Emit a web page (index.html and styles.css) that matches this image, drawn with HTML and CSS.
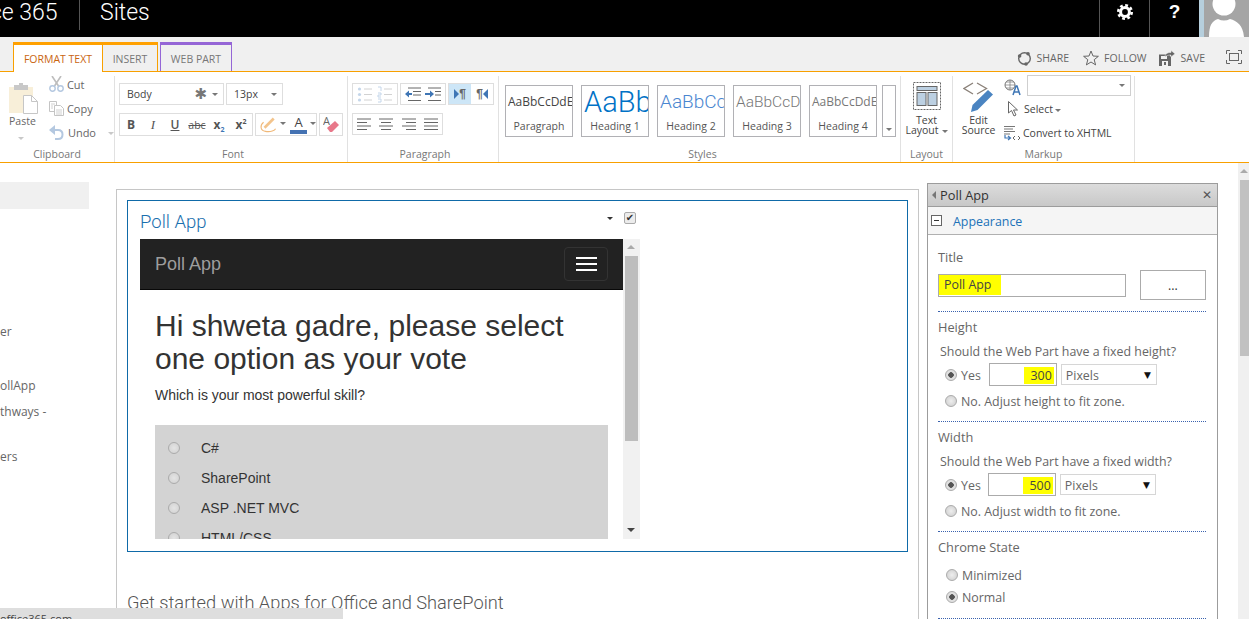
FILE: index.html
```html
<!DOCTYPE html>
<html lang="en">
<head>
<meta charset="utf-8">
<title>Poll App - Sites</title>
<link rel="stylesheet" href="styles.css">
</head>
<body>
<div class="page">
  <header class="topbar">
    <div class="brand">ce 365</div>
    <div class="site">Sites</div>
    <div class="top-space"></div>
    <div class="tool">
      <svg width="18" height="18" viewBox="0 0 18 18"><circle cx="9" cy="9" r="4.4" fill="none" stroke="#fff" stroke-width="3"/><circle cx="9" cy="9" r="6.7" fill="none" stroke="#fff" stroke-width="2.6" stroke-dasharray="2.8 2.46"/></svg>
    </div>
    <div class="tool tool-q">?</div>
    <div class="avatar">
      <svg width="45" height="37" viewBox="0 0 45 37"><circle cx="20" cy="4" r="11.5" fill="#fff"/><path d="M5 37c0-12 3-16 9-18 4 2 8 2 12 0 7 2 13 6 14 18z" fill="#fff"/></svg>
    </div>
  </header>

  <nav class="tabbar">
    <div class="tab tab-active">FORMAT TEXT</div>
    <div class="tab tab-insert">INSERT</div>
    <div class="tab tab-webpart">WEB PART</div>
    <div class="top-space"></div>
    <div class="action">
      <svg width="15" height="15" viewBox="0 0 15 15"><circle cx="7.5" cy="7.5" r="5.8" fill="none" stroke="#666" stroke-width="1.4"/><circle cx="2.6" cy="5" r="1.8" fill="#666"/><circle cx="11" cy="2.8" r="1.8" fill="#666"/><circle cx="9" cy="13" r="1.8" fill="#666"/></svg>
      <span>SHARE</span>
    </div>
    <div class="action action-follow">
      <svg width="16" height="16" viewBox="0 0 16 16"><path d="M8 1l2 5 5.4.3-4.2 3.4 1.4 5.2L8 12l-4.600 2.900 1.400-5.200L.6 6.300 6 6z" fill="none" stroke="#666" stroke-width="1"/></svg>
      <span>FOLLOW</span>
    </div>
    <div class="action action-save">
      <svg width="16" height="16" viewBox="0 0 16 16"><path d="M0 4.500h10l2 2V16H0z" fill="#666"/><rect x="2" y="6" width="6" height="3" fill="#f0f0f0"/><rect x="3" y="11" width="6" height="5" fill="#f0f0f0"/><rect x="5" y="12" width="2" height="3" fill="#666"/><path d="M6 7c0-3 2-4.500 6-4.500V.5l4 3.300-4 3.200V5C9.500 5 7.500 5.500 6 7z" fill="#666" stroke="#f0f0f0" stroke-width=".5"/></svg>
      <span>SAVE</span>
    </div>
    <div class="focus">
      <svg width="16" height="14" viewBox="0 0 16 14"><path d="M.5 4V.5H4M12 .5h3.500V4M15.500 10v3.500H12M4 13.500H.5V10" fill="none" stroke="#666"/><rect x="3.500" y="3.500" width="9" height="7" fill="none" stroke="#666"/></svg>
    </div>
  </nav>

  <section class="ribbon">
    <div class="group g-clip">
      <div class="group-body clip-body">
        <div class="paste">
          <svg width="29" height="31" viewBox="0 0 29 31"><rect x="0" y="4" width="24" height="26" fill="#f8efd9"/><rect x="5" y="2" width="14" height="5" fill="#c8c8c8"/><rect x="10" y="0" width="4" height="4" fill="#c8c8c8"/><path d="M14.500 12.500h8l6 6v12h-14z" fill="#fff" stroke="#c6c6c6"/><path d="M22.500 12.500v6h6" fill="none" stroke="#c6c6c6"/></svg>
          <span class="paste-label">Paste</span>
          <i class="caret caret-pale"></i>
        </div>
        <div class="clip-list">
          <div class="clip-row">
            <svg width="15" height="16" viewBox="0 0 15 16"><path d="M3 0l6.500 10M12 0L5.500 10" stroke="#bdbdbd" stroke-width="1.600" fill="none"/><circle cx="3.500" cy="12.500" r="2.700" fill="none" stroke="#b4c8e0" stroke-width="1.400"/><circle cx="11.500" cy="12.500" r="2.700" fill="none" stroke="#b4c8e0" stroke-width="1.400"/></svg>
            <span>Cut</span>
          </div>
          <div class="clip-row">
            <svg width="15" height="15" viewBox="0 0 15 15"><path d="M.5.500h7v10h-7z" fill="#fff" stroke="#c4c4c4"/><path d="M5.500 4.500h6l3 3v7h-9z" fill="#fff" stroke="#c4c4c4"/><path d="M7 9h6M7 11h6M7 13h6M2 3h4M2 5h2M2 7h2" stroke="#d0d0d0"/></svg>
            <span>Copy</span>
          </div>
          <div class="clip-row clip-undo">
            <svg width="15" height="15" viewBox="0 0 15 15"><path d="M1 5h8c3 0 4.500 2 4.500 4.500S12 14 9 14H6" fill="none" stroke="#b4c8e0" stroke-width="2"/><path d="M6 0v10L0 5z" fill="#b4c8e0"/></svg>
            <span>Undo</span>
            <i class="caret caret-pale"></i>
          </div>
        </div>
      </div>
      <div class="group-label">Clipboard</div>
    </div>

    <div class="group g-font">
      <div class="group-body stack">
        <div class="tool-row">
          <div class="field f-body"><span>Body</span><b class="star">✱</b><i class="caret"></i></div>
          <div class="field f-size"><span>13px</span><i class="caret"></i></div>
        </div>
        <div class="tool-row row-two">
          <div class="box b-format">
            <span class="fmt fmt-b">B</span>
            <span class="fmt fmt-i">I</span>
            <span class="fmt fmt-u">U</span>
            <span class="fmt fmt-s">abc</span>
            <span class="fmt fmt-x">x<sub>2</sub></span>
            <span class="fmt fmt-x">x<sup>2</sup></span>
          </div>
          <div class="box b-color">
            <svg width="20" height="19" viewBox="0 0 20 19"><path d="M5 12L15 2l2 2L7 14z" fill="#f3c48c"/><path d="M5 7c-4 3-4 9 2 10s10-1 11-3" fill="none" stroke="#f0b878" stroke-width="1.200"/></svg>
            <i class="caret caret-tight"></i>
            <span class="font-a">A</span>
            <i class="caret caret-tight"></i>
          </div>
          <div class="box b-erase">
            <svg width="16" height="17" viewBox="0 0 16 17"><text x="0" y="9" class="erase-a">A</text><path d="M4 12l8-7 4 4-7 7H7z" fill="#e8788a"/></svg>
          </div>
        </div>
      </div>
      <div class="group-label">Font</div>
    </div>

    <div class="group g-para">
      <div class="group-body stack">
        <div class="tool-row para-row">
          <div class="box b-icons b-lists">
            <svg width="16" height="17" viewBox="0 0 16 17"><path d="M7 3h8M7 8.500h8M7 14h8" stroke="#d2d2d2"/><circle cx="2.500" cy="3" r="1.600" fill="#c4d6ea"/><circle cx="2.500" cy="8.500" r="1.600" fill="#c4d6ea"/><circle cx="2.500" cy="14" r="1.600" fill="#c4d6ea"/></svg>
            <svg width="16" height="17" viewBox="0 0 16 17"><path d="M7 3h8M7 8.500h8M7 14h8" stroke="#d2d2d2"/><path d="M1 1h3v4M1 7h3v2H1v2h3M1 13h3v3H1" stroke="#c4d6ea" fill="none"/></svg>
          </div>
          <div class="box b-icons">
            <svg width="16" height="15" viewBox="0 0 16 15"><path d="M3 1h13M8 4.500h8M8 8h8M3 13.500h13" stroke="#666"/><path d="M0 7l4-3.500V6h3v2H4v2.500z" fill="#3f76b5"/></svg>
            <svg width="16" height="15" viewBox="0 0 16 15"><path d="M3 1h13M10 4.500h6M10 8h6M3 13.500h13" stroke="#666"/><path d="M9 7L5 3.500V6H0v2h5v2.500z" fill="#3f76b5"/></svg>
          </div>
          <div class="box b-dir">
            <div class="dir dir-on"><svg width="5" height="10" viewBox="0 0 5 10"><path d="M0 0l5 5-5 5z" fill="#3f76b5"/></svg><span>¶</span></div>
            <div class="dir"><span>¶</span><svg width="5" height="10" viewBox="0 0 5 10"><path d="M5 0L0 5l5 5z" fill="#3f76b5"/></svg></div>
          </div>
        </div>
        <div class="tool-row row-two para-row">
          <div class="box b-align">
            <svg width="14" height="12" viewBox="0 0 14 12"><path d="M0 1h14M0 4.500h10M0 8h14M0 11.500h10" stroke="#666"/></svg>
            <svg width="14" height="12" viewBox="0 0 14 12"><path d="M0 1h14M2 4.500h10M0 8h14M2 11.500h10" stroke="#666"/></svg>
            <svg width="14" height="12" viewBox="0 0 14 12"><path d="M0 1h14M4 4.500h10M0 8h14M4 11.500h10" stroke="#666"/></svg>
            <svg width="14" height="12" viewBox="0 0 14 12"><path d="M0 1h14M0 4.500h14M0 8h14M0 11.500h14" stroke="#666"/></svg>
          </div>
        </div>
      </div>
      <div class="group-label">Paragraph</div>
    </div>

    <div class="group g-styles">
      <div class="group-body style-list">
        <div class="style-box"><div class="preview p-para">AaBbCcDdE</div><div class="style-name">Paragraph</div></div>
        <div class="style-box"><div class="preview p-h1">AaBb</div><div class="style-name">Heading 1</div></div>
        <div class="style-box"><div class="preview p-h2">AaBbCc</div><div class="style-name">Heading 2</div></div>
        <div class="style-box"><div class="preview p-h3">AaBbCcDd</div><div class="style-name">Heading 3</div></div>
        <div class="style-box"><div class="preview p-h4">AaBbCcDdE</div><div class="style-name">Heading 4</div></div>
        <div class="style-more"><i class="caret"></i></div>
      </div>
      <div class="group-label">Styles</div>
    </div>

    <div class="group g-layout">
      <div class="group-body big-col">
        <svg width="28" height="28" viewBox="0 0 28 28"><rect x=".5" y=".5" width="27" height="27" fill="none" stroke="#666" stroke-dasharray="2 1"/><rect x="4" y="4.500" width="20" height="4" fill="#bcd0e2" stroke="#666"/><rect x="4" y="10.500" width="9" height="13" fill="#bcd0e2" stroke="#666"/><rect x="15" y="10.500" width="9" height="13" fill="#bcd0e2" stroke="#666"/></svg>
        <div class="big-label">Text<br>Layout<i class="caret caret-inline"></i></div>
      </div>
      <div class="group-label">Layout</div>
    </div>

    <div class="group g-markup">
      <div class="group-body markup-body">
        <div class="big-col edit-col">
          <svg width="31" height="30" viewBox="0 0 31 30"><path d="M10 1L1 6.500l9 5.500M14 1l9.500 5.500L14 12" fill="none" stroke="#8a8078" stroke-width="1.300"/><path d="M8 30l1.500-7L25 8l5 4.500L14.500 28z" fill="#4a84c1"/></svg>
          <div class="big-label">Edit<br>Source</div>
        </div>
        <div class="markup-list">
          <div class="markup-top">
            <svg width="17" height="17" viewBox="0 0 17 17"><circle cx="6" cy="6" r="5" fill="none" stroke="#777"/><path d="M1 6h10M6 1v10M2 3h8M2 9h8" stroke="#777" stroke-width=".7"/><path d="M9 16l3-9h1l3 9M10.500 13h4" fill="none" stroke="#3f76b5" stroke-width="1.500"/></svg>
            <div class="lang-select"><i class="caret"></i></div>
          </div>
          <div class="markup-row markup-select">
            <svg width="10" height="16" viewBox="0 0 10 16"><path d="M.5.500v11.500l3-2.500 2.500 5.500 2-1-2.500-5H9.500z" fill="#fff" stroke="#666"/></svg>
            <span>Select</span><i class="caret caret-inline"></i>
          </div>
          <div class="markup-row markup-convert">
            <svg width="17" height="15" viewBox="0 0 17 15"><path d="M0 .500h11M0 3h9M0 5.500h11M0 8h6" stroke="#777"/><path d="M1 9v3h5M4 10l2.500 2L4 14" fill="none" stroke="#3f76b5" stroke-width="1.200"/><path d="M11 10l-2 2 2 2M14 10l2 2-2 2" fill="none" stroke="#666"/></svg>
            <span>Convert to XHTML</span>
          </div>
        </div>
      </div>
      <div class="group-label">Markup</div>
    </div>
  </section>

  <div class="work">
    <aside class="sidenav">
      <div class="nav-current"></div>
      <div class="nav-item nav-a">er</div>
      <div class="nav-item nav-b">ollApp</div>
      <div class="nav-item nav-c">thways -</div>
      <div class="nav-item nav-d">ers</div>
    </aside>

    <main class="content">
      <div class="webpart">
        <div class="wp-head">
          <h2 class="wp-title">Poll App</h2>
          <i class="caret caret-dark"></i>
          <span class="wp-check">✔</span>
        </div>
        <div class="frame">
          <div class="frame-main">
            <div class="navbar">
              <span class="nav-brand">Poll App</span>
              <div class="burger"><i></i><i></i><i></i></div>
            </div>
            <div class="frame-body">
              <h1 class="poll-q">Hi shweta gadre, please select one option as your vote</h1>
              <p class="poll-sub">Which is your most powerful skill?</p>
              <div class="poll-options">
                <div class="poll-opt"><i class="radio"></i><span>C#</span></div>
                <div class="poll-opt"><i class="radio"></i><span>SharePoint</span></div>
                <div class="poll-opt"><i class="radio"></i><span>ASP .NET MVC</span></div>
                <div class="poll-opt"><i class="radio"></i><span>HTML/CSS</span></div>
              </div>
            </div>
          </div>
          <div class="frame-scroll">
            <i class="arrow-up"></i>
            <div class="frame-thumb"></div>
            <i class="arrow-down"></i>
          </div>
        </div>
      </div>
      <h3 class="started">Get started with Apps for Office and SharePoint</h3>
    </main>

    <aside class="panel">
      <div class="panel-head">
        <i class="back-arrow"></i>
        <span class="panel-title">Poll App</span>
        <span class="panel-close">✕</span>
      </div>
      <div class="panel-sec">
        <span class="minus"></span>
        <span class="panel-sec-name">Appearance</span>
      </div>
      <div class="panel-body">
        <div class="p-label">Title</div>
        <div class="title-row">
          <div class="title-input"><span class="hl hl-title">Poll App</span></div>
          <div class="more-btn">...</div>
        </div>
        <div class="dots"></div>
        <div class="p-label">Height</div>
        <div class="p-question">Should the Web Part have a fixed height?</div>
        <div class="size-row">
          <i class="radio radio-on"></i><span class="yes">Yes</span>
          <div class="size-input"><span class="hl hl-num">300</span></div>
          <div class="unit"><span>Pixels</span><b>▼</b></div>
        </div>
        <div class="no-row"><i class="radio"></i><span>No. Adjust height to fit zone.</span></div>
        <div class="dots"></div>
        <div class="p-label">Width</div>
        <div class="p-question">Should the Web Part have a fixed width?</div>
        <div class="size-row size-w">
          <i class="radio radio-on"></i><span class="yes">Yes</span>
          <div class="size-input"><span class="hl hl-num">500</span></div>
          <div class="unit"><span>Pixels</span><b>▼</b></div>
        </div>
        <div class="no-row"><i class="radio"></i><span>No. Adjust width to fit zone.</span></div>
        <div class="dots"></div>
        <div class="p-label">Chrome State</div>
        <div class="state-row state-first"><i class="radio"></i><span>Minimized</span></div>
        <div class="state-row"><i class="radio radio-on"></i><span>Normal</span></div>
        <div class="dots dots-last"></div>
      </div>
    </aside>

    <div class="page-scroll">
      <i class="arrow-up"></i>
      <div class="page-thumb"></div>
    </div>
  </div>

  <div class="status">office365.com</div>
</div>
</body>
</html>
```
FILE: styles.css
```css
* { box-sizing: border-box; }
html, body { margin: 0; padding: 0; }
body { font-family: "Open Sans", "Liberation Sans", sans-serif; color: #444; background: #fff; }
i { display: block; font-style: normal; }
.page { position: relative; width: 1249px; height: 619px; overflow: hidden; }

/* top bar */
.topbar { display: flex; height: 37px; background: #000; color: #fff; }
.brand { width: 80px; height: 30px; border-right: 1px solid #555; font-family: Roboto, sans-serif; font-size: 23px; font-weight: 300; line-height: 26px; text-indent: -10px; white-space: nowrap; }
.site { margin-left: 20px; font-family: Roboto, sans-serif; font-size: 23px; font-weight: 300; line-height: 26px; }
.top-space { flex: 1; }
.tool { width: 50px; display: flex; justify-content: center; padding-top: 3px; border-left: 1px solid #555; }
.tool-q { font: bold 19px/24px "Liberation Sans", sans-serif; padding-top: 0; }
.avatar { width: 50px; padding-left: 5px; background: linear-gradient(to right, #b6cfdd 5px, #a5a5a5 5px); }
.avatar svg { display: block; }

/* tab bar */
.tabbar { display: flex; height: 35px; padding: 5px 7px 0 13px; background: #f0f0f0; border-bottom: 1px solid #f8a000; }
.tab { height: 30px; margin-bottom: -1px; font-size: 10.500px; line-height: 28px; text-align: center; border-top: 3px solid #ffa000; color: #777; }
.tab-active { width: 90px; background: #fff; color: #c9650f; border-left: 1px solid #f8a000; border-right: 1px solid #f8a000; }
.tab-insert { width: 55px; border-right: 1px solid #f8a000; }
.tab-webpart { width: 72px; margin-left: 2px; height: 29px; border-top-color: #9566d6; border-left: 1px solid #9566d6; border-right: 1px solid #9566d6; }
.action { display: flex; align-items: center; gap: 5px; height: 32px; font-size: 10.500px; color: #666; }
.action-follow { margin-left: 14px; }
.action-save { margin-left: 12px; gap: 6px; }
.focus { margin-left: 21px; height: 32px; padding-top: 8px; }
.focus svg { display: block; }

/* ribbon */
.ribbon { display: flex; height: 91px; padding-top: 4px; border-bottom: 1px solid #f8a000; }
.group { display: flex; flex-direction: column; height: 86px; border-right: 1px solid #e1e1e1; }
.group-body { flex: 1; min-height: 0; }
.group-label { height: 15px; font-size: 10.500px; line-height: 14px; text-align: center; color: #777; }
.g-clip { width: 115px; }
.g-font { width: 233px; padding-left: 4px; }
.g-para { width: 151px; padding-left: 4px; }
.g-styles { width: 402px; padding-left: 6px; }
.g-layout { width: 52px; }
.g-markup { width: 182px; }
.stack { padding-top: 7px; }
.tool-row { display: flex; gap: 2px; }
.row-two { margin-top: 8px; }
.caret { width: 0; height: 0; border-left: 3.500px solid transparent; border-right: 3.500px solid transparent; border-top: 3.500px solid #777; }
.caret-pale { border-top-color: #c8c8c8; }
.caret-tight { margin: 8px 0 0 3px; align-self: flex-start; }
.caret-inline { display: inline-block; margin-left: 3px; vertical-align: middle; }
.caret-dark { border-top-color: #333; border-left-width: 3px; border-right-width: 3px; margin: 16px 0 0 auto; }

.clip-body { display: flex; }
.paste { width: 49px; padding: 7px 0 0 9px; }
.paste svg { display: block; }
.paste-label { display: block; width: 24px; margin-top: -1px; font-size: 10.500px; line-height: 16px; text-align: center; color: #666; }
.paste .caret { margin: 8px 0 0 9px; }
.clip-list { font-size: 11px; color: #666; }
.clip-row { display: flex; align-items: center; gap: 3px; height: 16px; margin-bottom: 8px; }
.clip-undo { gap: 4px; }
.clip-undo .caret { margin: 3px 0 0 8px; }

.field, .box { height: 22px; border: 1px solid #dedede; display: flex; align-items: center; background: #fff; }
.field { font-size: 10.500px; color: #444; padding-left: 7px; }
.f-body { width: 105px; }
.f-size { width: 57px; }
.field span { flex: 1; }
.field .caret { margin-right: 5px; }
.star { font: 15px/1 "DejaVu Sans", sans-serif; color: #777; margin-right: 5px; }
.b-format { width: 134px; height: 23px; }
.fmt { flex: none; width: 22px; text-align: center; color: #555; font-size: 12px; line-height: 20px; white-space: nowrap; }
.fmt-b { font-weight: 700; }
.fmt-i { font-style: italic; font-family: "Liberation Serif", serif; font-size: 13px; }
.fmt-u { text-decoration: underline; font-weight: 600; }
.fmt-s { font-size: 10.500px; text-decoration: line-through; }
.fmt-x { font-weight: 700; }
.fmt sub, .fmt sup { font-size: 7px; color: #3f76b5; line-height: 0; }
.fmt sup { color: #555; }
.b-color { width: 62px; height: 23px; padding-left: 3px; }
.font-a { width: 18px; margin-left: 4px; text-align: center; font-size: 13px; line-height: 14px; color: #444; border-bottom: 4px solid #4472b2; height: 19px; }
.b-erase { width: 24px; height: 23px; justify-content: center; }
.erase-a { font-size: 11px; fill: #666; }
.para-row .box { height: 22px; }
.b-icons { width: 46px; justify-content: space-between; padding: 0 4px; }
.b-dir { width: 46px; padding: 0; }
.dir { width: 22px; height: 20px; display: flex; align-items: center; justify-content: center; font: bold 12px/20px "Liberation Sans", sans-serif; color: #666; }
.dir-on { background: #cde6f7; }
.b-align { width: 91px; justify-content: space-between; padding: 0 4px; height: 22px; }

.style-list { display: flex; gap: 8px; padding-top: 9px; }
.style-box { width: 68px; height: 52px; border: 1px solid #b1b1b5; overflow: hidden; }
.preview { height: 32px; padding-left: 2px; white-space: nowrap; overflow: hidden; line-height: 32px; font-family: Roboto, sans-serif; font-weight: 300; }
.p-para { font-family: "Open Sans", sans-serif; font-size: 12px; color: #444; font-weight: 400; }
.p-h1 { font-size: 29px; color: #0072c6; }
.p-h2 { font-size: 19px; color: #4a86d0; }
.p-h3 { font-size: 15.500px; color: #777; }
.p-h4 { font-family: "Open Sans", sans-serif; font-size: 12px; color: #777; font-weight: 400; }
.style-name { font-size: 10.500px; line-height: 16px; text-align: center; color: #555; }
.style-more { width: 14px; height: 52px; margin-left: -3px; border: 1px solid #b1b1b5; display: flex; align-items: flex-end; justify-content: center; padding-bottom: 5px; }

.big-col { display: flex; flex-direction: column; align-items: center; padding-top: 6px; }
.big-col svg { display: block; }
.big-label { margin-top: 5px; font-size: 10.500px; line-height: 10px; text-align: center; color: #444; white-space: nowrap; }
.markup-body { display: flex; }
.edit-col { width: 51px; padding-left: 0; }
.edit-col .big-label { margin-top: 3px; }
.markup-list { font-size: 10.500px; color: #444; }
.markup-top { display: flex; gap: 6px; margin-top: -1px; }
.lang-select { width: 104px; height: 21px; border: 1px solid #cfcfcf; display: flex; justify-content: flex-end; align-items: center; padding-right: 5px; margin-top: 0; }
.markup-top svg { margin-top: 4px; }
.markup-row { display: flex; align-items: center; height: 16px; }
.markup-select { margin-top: 5px; padding-left: 4px; gap: 5px; }
.markup-select span { margin-left: 1px; }
.markup-select .caret { margin-left: -3px; margin-top: 2px; }
.markup-convert { margin-top: 8px; gap: 2px; }

/* workspace */
.work { display: flex; height: 456px; }
.sidenav { width: 116px; padding-top: 19px; font-size: 12px; color: #666; }
.nav-current { width: 89px; height: 27px; background: #f0f0f0; }
.nav-item { line-height: 18px; white-space: nowrap; }
.nav-a { margin-top: 114px; }
.nav-b { margin-top: 36px; }
.nav-c { margin-top: 8px; }
.nav-d { margin-top: 27px; }

.content { width: 803px; height: 430px; margin-top: 26px; padding: 10px 0 0 10px; border: 1px solid #c6c6c6; border-bottom: 0; }
.webpart { width: 781px; height: 352px; padding: 0 12px; border: 1px solid #0f6aa8; }
.wp-head { display: flex; height: 38px; }
.wp-title { margin: 10px 0 0; font-family: Roboto, sans-serif; font-size: 18.500px; font-weight: 300; line-height: 22px; color: #1a6fae; }
.wp-check { width: 12px; height: 12px; margin: 11px 259px 0 11px; border: 1px solid #aaa; border-radius: 2px; background: #ececec; font: 10px/10px "DejaVu Sans", sans-serif; color: #333; text-align: center; }
.frame { display: flex; width: 500px; height: 300px; overflow: hidden; font-family: "Liberation Sans", sans-serif; color: #333; }
.frame-main { width: 483px; }
.navbar { display: flex; align-items: center; justify-content: space-between; height: 51px; padding: 0 15px; background: #222; border-bottom: 1px solid #080808; }
.nav-brand { font-size: 18px; color: #9d9d9d; }
.burger { width: 44px; height: 34px; padding: 9px 10px 0 11px; border: 1px solid #333; border-radius: 4px; margin-bottom: 1px; }
.burger i { height: 2px; margin-bottom: 4px; background: #fff; }
.frame-body { padding: 0 15px; }
.poll-q { margin: 19px 0 0; font-size: 30px; font-weight: 400; line-height: 33px; }
.poll-sub { margin: 10px 0 0; font-size: 14px; line-height: 20px; }
.poll-options { margin-top: 20px; height: 114px; overflow: hidden; background: #d3d3d3; padding-top: 8px; }
.poll-opt { display: flex; align-items: center; height: 30px; padding-left: 13px; font-size: 14px; }
.poll-opt span { margin-left: 21px; }
.frame-scroll { width: 17px; background: #f1f1f1; position: relative; padding-top: 17px; }
.frame-thumb { width: 13px; height: 185px; margin-left: 2px; background: #bdbdbd; }
.arrow-up, .arrow-down { position: absolute; width: 0; height: 0; border-left: 4px solid transparent; border-right: 4px solid transparent; left: 4px; }
.arrow-up { top: 6px; border-bottom: 4px solid #aaa; }
.arrow-down { bottom: 7px; border-top: 4px solid #444; }
.started { margin: 39px 0 0; font-family: Roboto, sans-serif; font-size: 18.250px; font-weight: 300; line-height: 24px; color: #555; white-space: nowrap; }

.panel { width: 291px; height: 440px; margin: 20px 0 0 8px; border: 1px solid #9c9c9c; font-size: 12.400px; color: #666; }
.panel-head { display: flex; align-items: center; height: 23px; background: linear-gradient(#dcdcdc, #c8c8c8); border-bottom: 1px solid #9c9c9c; color: #333; }
.back-arrow { width: 0; height: 0; margin: 0 4px 0 4px; border-top: 4px solid transparent; border-bottom: 4px solid transparent; border-right: 4px solid #777; }
.panel-title { flex: 1; font-size: 12.800px; }
.panel-close { width: 15px; font: bold 12px/1 "DejaVu Sans", sans-serif; color: #555; }
.panel-sec { display: flex; align-items: center; height: 28px; padding: 2px 0 0 3px; background: #f5f5f5; border-bottom: 1px solid #b0b0b0; }
.minus { position: relative; width: 11px; height: 11px; margin-top: -2px; border: 1px solid #666; background: #fff; }
.minus::after { content: ""; position: absolute; left: 2px; top: 4px; width: 5px; height: 1px; background: #333; }
.panel-sec-name { margin-left: 11px; color: #2172b8; }
.panel-body { padding: 14px 11px 0 10px; }
.p-label { height: 18px; font-size: 12.800px; line-height: 16px; margin-top: 7px; }
.p-label:first-child { margin-top: 0; }
.p-question { margin: 6px 0 0 2px; line-height: 18px; white-space: nowrap; }
.title-row { display: flex; align-items: center; gap: 14px; height: 30px; margin-top: 3px; color: #333; }
.title-input { width: 188px; height: 23px; border: 1px solid #ababab; }
.hl { background: #ffff00; color: #444; }
.hl-title { display: inline-block; height: 20px; padding: 0 10px 0 5px; line-height: 20px; }
.more-btn { width: 66px; height: 30px; border: 1px solid #ababab; text-align: center; line-height: 30px; }
.dots { height: 1px; margin-top: 11px; border-top: 1px dotted #3a62ae; }
.size-row { display: flex; align-items: center; height: 23px; margin-top: 2px; padding-left: 7px; }
.yes { margin-left: 4px; padding-top: 2px; }
.size-input { width: 68px; height: 23px; margin-left: 8px; border: 1px solid #ababab; text-align: right; padding: 3px 2px 0 0; }
.size-w .size-input { margin-left: 7px; }
.hl-num { display: inline-block; height: 17px; padding: 0 2px 0 7px; line-height: 18px; }
.unit { display: flex; justify-content: space-between; align-items: center; width: 96px; height: 21px; margin-left: 4px; border: 1px solid #d6d6d6; padding: 2px 5px 0 4px; }
.unit b { font: 9px/1 "DejaVu Sans", sans-serif; color: #111; }
.no-row { display: flex; align-items: center; height: 18px; margin-top: 6px; padding-left: 7px; }
.no-row span, .state-row span { margin-left: 4px; }
.state-row { display: flex; align-items: center; height: 18px; margin-top: 4px; padding-left: 8px; }
.state-first { margin-top: 9px; }
.dots-last { margin-top: 12px; }
.radio { flex: none; width: 12px; height: 12px; border-radius: 50%; border: 1px solid #ababab; background: radial-gradient(#eee, #ccc); }
.radio-on { background: radial-gradient(#555 0 2.500px, #e0e0e0 3px); }
.poll-opt .radio { background: radial-gradient(#e4e4e4, #d0d0d0); }

.page-scroll { position: relative; width: 11px; margin-left: 20px; background: #f0f0f0; padding-top: 17px; }
.page-scroll .arrow-up { left: 2px; top: 6px; border-bottom-color: #aaa; }
.page-thumb { width: 9px; height: 176px; margin-left: 2px; background: #c1c1c1; }

.status { position: absolute; left: 0; top: 608px; width: 343px; height: 20px; background: #dedede; font-size: 11px; line-height: 22px; color: #444; white-space: nowrap; }
```
